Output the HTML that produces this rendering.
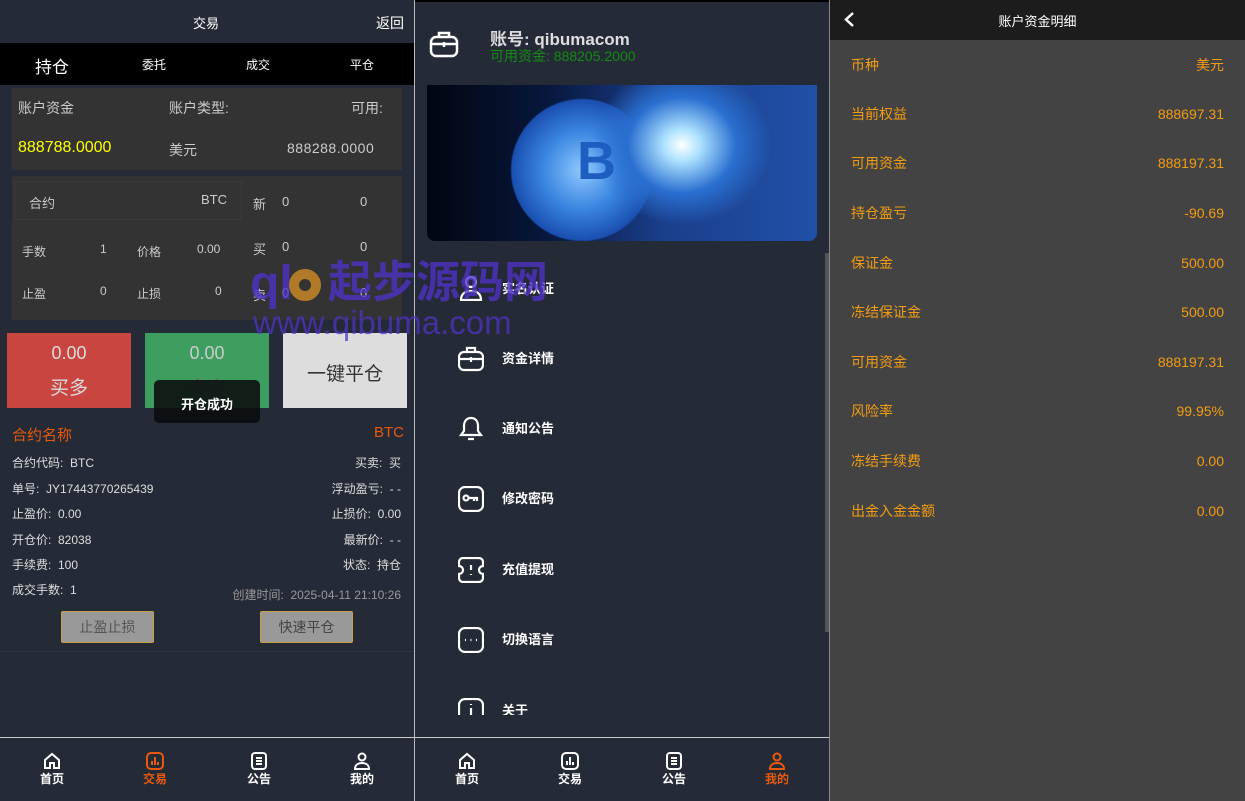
<!DOCTYPE html>
<html><head><meta charset="utf-8"><style>
*{margin:0;padding:0;box-sizing:border-box}
body{width:1245px;height:801px;overflow:hidden;background:#252b36;font-family:"Liberation Sans","Noto Sans CJK SC",sans-serif;position:relative;color:#ddd}
.a{position:absolute;white-space:nowrap}
.p{position:absolute;top:0;height:801px}
#L{left:0;width:414px;background:#252b36}
#M{left:415px;width:415px;background:#252b36}
#R{left:830px;width:415px;background:#434343}
.sep{position:absolute;left:414px;top:0;width:1px;height:801px;background:#bbb}
.sep2{position:absolute;left:829px;top:0;width:1px;height:801px;background:#888}
.nav{position:absolute;left:0;top:737px;width:100%;height:64px;border-top:1px solid #ccc;background:#252b36}
.nav div{position:absolute;top:0;width:60px;text-align:center;font-size:12px;color:#fff;font-weight:bold;line-height:16px}
.nav svg{display:block;margin:14px auto 1px}
.r{font-size:12px;color:#ddd;line-height:16px}
.rr{font-size:14px;color:#f39c12;line-height:20px}
.mi{position:absolute;left:43px;width:26px;height:26px}
.mt{position:absolute;left:87px;font-size:13px;color:#fff;font-weight:bold;line-height:18px}
</style></head><body>
<div id="L" class="p">
 <div class="a" style="left:193px;top:13px;font-size:13px;color:#fff">交易</div>
 <div class="a" style="left:376px;top:13px;font-size:14px;color:#fff">返回</div>
 <div class="a" style="left:0;top:43px;width:414px;height:42px;background:#000"></div>
 <div class="a" style="left:35px;top:53px;font-size:17px;color:#fff">持仓</div>
 <div class="a" style="left:142px;top:56px;font-size:12px;color:#fff">委托</div>
 <div class="a" style="left:246px;top:56px;font-size:12px;color:#fff">成交</div>
 <div class="a" style="left:350px;top:56px;font-size:12px;color:#fff">平仓</div>
 <div class="a" style="left:12px;top:88px;width:390px;height:82px;background:#333"></div>
 <div class="a" style="left:18px;top:98px;font-size:14px;color:#ccc">账户资金</div>
 <div class="a" style="left:169px;top:98px;font-size:14px;color:#ccc">账户类型:</div>
 <div class="a" style="left:351px;top:98px;font-size:14px;color:#ccc">可用:</div>
 <div class="a" style="left:18px;top:139px;font-size:16px;color:#ff0">888788.0000</div>
 <div class="a" style="left:169px;top:140px;font-size:14px;color:#ccc">美元</div>
 <div class="a" style="left:287px;top:140px;font-size:14px;color:#ccc;letter-spacing:.5px">888288.0000</div>
 <div class="a" style="left:12px;top:176px;width:390px;height:144px;background:#333"></div>
 <div class="a" style="left:14px;top:181px;width:228px;height:39px;border:1px solid #3a3a3a"></div>
 <div class="a" style="left:29px;top:193px;font-size:13px;color:#ccc">合约</div>
 <div class="a" style="left:201px;top:192px;font-size:13px;color:#ccc">BTC</div>
 <div class="a" style="left:253px;top:194px;font-size:13px;color:#ccc">新</div>
 <div class="a" style="left:282px;top:194px;font-size:13px;color:#ccc">0</div>
 <div class="a" style="left:360px;top:194px;font-size:13px;color:#ccc">0</div>
 <div class="a" style="left:253px;top:239px;font-size:13px;color:#ccc">买</div>
 <div class="a" style="left:282px;top:239px;font-size:13px;color:#ccc">0</div>
 <div class="a" style="left:360px;top:239px;font-size:13px;color:#ccc">0</div>
 <div class="a" style="left:253px;top:285px;font-size:13px;color:#ccc">卖</div>
 <div class="a" style="left:282px;top:285px;font-size:13px;color:#ccc">0</div>
 <div class="a" style="left:360px;top:285px;font-size:13px;color:#ccc">0</div>
 <div class="a" style="left:22px;top:243px;font-size:12px;color:#ccc">手数</div>
 <div class="a" style="left:100px;top:242px;font-size:12px;color:#ccc">1</div>
 <div class="a" style="left:137px;top:243px;font-size:12px;color:#ccc">价格</div>
 <div class="a" style="left:197px;top:242px;font-size:12px;color:#ccc">0.00</div>
 <div class="a" style="left:22px;top:285px;font-size:12px;color:#ccc">止盈</div>
 <div class="a" style="left:100px;top:284px;font-size:12px;color:#ccc">0</div>
 <div class="a" style="left:137px;top:285px;font-size:12px;color:#ccc">止损</div>
 <div class="a" style="left:215px;top:284px;font-size:12px;color:#ccc">0</div>
 <div class="a" style="left:7px;top:333px;width:124px;height:75px;background:#c9453f"></div>
 <div class="a" style="left:7px;top:343px;width:124px;text-align:center;font-size:18px;color:#ddd">0.00</div>
 <div class="a" style="left:7px;top:373px;width:124px;text-align:center;font-size:19px;color:#ddd">买多</div>
 <div class="a" style="left:145px;top:333px;width:124px;height:75px;background:#3e9e5f"></div>
 <div class="a" style="left:145px;top:343px;width:124px;text-align:center;font-size:18px;color:#ccc">0.00</div>
 <div class="a" style="left:145px;top:373px;width:124px;text-align:center;font-size:19px;color:#666">卖空</div>
 <div class="a" style="left:283px;top:333px;width:124px;height:75px;background:#ddd"></div>
 <div class="a" style="left:283px;top:359px;width:124px;text-align:center;font-size:19px;color:#333">一键平仓</div>
 <div class="a" style="left:154px;top:380px;width:106px;height:43px;background:rgba(10,12,14,.88);border-radius:5px"></div>
 <div class="a" style="left:154px;top:394px;width:106px;text-align:center;font-size:13px;color:#fff;font-weight:bold">开仓成功</div>
 <div class="a" style="left:12px;top:424px;font-size:15px;color:#e8590c">合约名称</div>
 <div class="a" style="left:374px;top:424px;font-size:15px;color:#e8590c">BTC</div>
 <div class="a r" style="left:12px;top:455px">合约代码:&nbsp;&nbsp;BTC</div>
 <div class="a r" style="right:13px;top:455px">买卖:&nbsp;&nbsp;买</div>
 <div class="a r" style="left:12px;top:481px">单号:&nbsp;&nbsp;JY17443770265439</div>
 <div class="a r" style="right:13px;top:481px">浮动盈亏:&nbsp;&nbsp;- -</div>
 <div class="a r" style="left:12px;top:506px">止盈价:&nbsp;&nbsp;0.00</div>
 <div class="a r" style="right:13px;top:506px">止损价:&nbsp;&nbsp;0.00</div>
 <div class="a r" style="left:12px;top:532px">开仓价:&nbsp;&nbsp;82038</div>
 <div class="a r" style="right:13px;top:532px">最新价:&nbsp;&nbsp;- -</div>
 <div class="a r" style="left:12px;top:557px">手续费:&nbsp;&nbsp;100</div>
 <div class="a r" style="right:13px;top:557px">状态:&nbsp;&nbsp;持仓</div>
 <div class="a r" style="left:12px;top:582px">成交手数:&nbsp;&nbsp;1</div>
 <div class="a r" style="right:13px;top:587px;color:#999">创建时间:&nbsp;&nbsp;2025-04-11 21:10:26</div>
 <div class="a" style="left:61px;top:611px;width:93px;height:32px;background:#999;border:1px solid #c9a040;border-radius:2px;text-align:center;line-height:30px;font-size:14px;color:#555">止盈止损</div>
 <div class="a" style="left:260px;top:611px;width:93px;height:32px;background:#999;border:1px solid #c9a040;border-radius:2px;text-align:center;line-height:30px;font-size:14px;color:#444">快速平仓</div>
 <div class="a" style="left:0;top:651px;width:414px;height:1px;background:#2f3540"></div>
 <div class="nav">
  <div style="left:22px"><svg width="18" height="18" viewBox="0 0 18 18" fill="none" stroke="#fff" stroke-width="2"><path d="M2 8L9 2l7 6v8H11v-5H7v5H2z"/></svg>首页</div>
  <div style="left:125px;color:#e8590c"><svg width="18" height="18" viewBox="0 0 18 18" fill="none" stroke="#e8590c" stroke-width="2"><rect x="1" y="1" width="16" height="16" rx="4"/><path d="M6 13V9M9 13V5M12 13v-3"/></svg>交易</div>
  <div style="left:229px"><svg width="18" height="18" viewBox="0 0 18 18" fill="none" stroke="#fff" stroke-width="2"><rect x="2" y="1" width="14" height="16" rx="3"/><path d="M6 6h6M6 9h6M6 12h6"/></svg>公告</div>
  <div style="left:332px"><svg width="18" height="18" viewBox="0 0 18 18" fill="none" stroke="#fff" stroke-width="2"><circle cx="9" cy="5" r="3.5"/><path d="M2 17c0-4 3-6 7-6s7 2 7 6z"/></svg>我的</div>
 </div>
</div>
<div class="sep"></div>
<div id="M" class="p">
 <div class="a" style="left:0;top:0;width:415px;height:2px;background:#000"></div>
 <svg class="a" style="left:14px;top:29px" width="30" height="29" viewBox="0 0 30 29" fill="none" stroke="#fff" stroke-width="2.5"><rect x="2" y="8" width="26" height="19" rx="5"/><path d="M10 8V4h10v4M2 15h26M15 13v5"/></svg>
 <div class="a" style="left:75px;top:25px;font-size:17px;font-weight:bold;color:#ddd">账号:&nbsp;qibumacom</div>
 <div class="a" style="left:75px;top:46px;font-size:14px;color:#138a13">可用资金:&nbsp;888205.2000</div>
 <div class="a" style="left:12px;top:85px;width:390px;height:156px;border-radius:0 0 8px 8px;overflow:hidden;background:radial-gradient(ellipse 90px 80px at 255px 60px,#fff 0%,#aee2ff 20%,#2a6fd0 60%,rgba(20,50,140,0) 100%),radial-gradient(circle 78px at 155px 85px,#8fc8ff 0%,#3a86e0 50%,#1a4fb0 90%,rgba(0,0,0,0) 92%),linear-gradient(90deg,#020610 0%,#07163a 30%,#1a3e8a 60%,#2150a8 100%)">
  <div style="position:absolute;left:150px;top:45px;font-size:54px;color:#1d5ec0;font-weight:bold">B</div>
 </div>
 <div class="a" style="left:410px;top:253px;width:4px;height:379px;background:#555"></div>
 <svg class="mi" style="top:275px" viewBox="0 0 26 26" fill="none" stroke="#fff" stroke-width="2.2"><circle cx="13" cy="7" r="5"/><path d="M3 25c0-6 4-9 10-9s10 3 10 9z"/></svg><div class="mt" style="top:280px">实名认证</div>
 <svg class="mi" style="top:346px" viewBox="0 0 26 26" fill="none" stroke="#fff" stroke-width="2.2"><rect x="1" y="6" width="24" height="18" rx="5"/><path d="M9 6V2h8v4M1 13h24M13 11v5"/></svg><div class="mt" style="top:350px">资金详情</div>
 <svg class="mi" style="top:416px" viewBox="0 0 26 26" fill="none" stroke="#fff" stroke-width="2.2"><path d="M13 2c-5 0-7 4-7 8v5l-3 4h20l-3-4v-5c0-4-2-8-7-8zM10 23h6"/></svg><div class="mt" style="top:420px">通知公告</div>
 <svg class="mi" style="top:486px" viewBox="0 0 26 26" fill="none" stroke="#fff" stroke-width="2.2"><rect x="1" y="1" width="24" height="24" rx="6"/><circle cx="8" cy="12" r="2.5"/><path d="M10 12h9v3M16 12v3"/></svg><div class="mt" style="top:490px">修改密码</div>
 <svg class="mi" style="top:557px" viewBox="0 0 26 26" fill="none" stroke="#fff" stroke-width="2.2"><path d="M5 1h16a4 4 0 014 4v4a4 4 0 000 8v4a4 4 0 01-4 4H5a4 4 0 01-4-4v-4a4 4 0 000-8V5a4 4 0 014-4zM13 8v5M13 17v1"/></svg><div class="mt" style="top:561px">充值提现</div>
 <svg class="mi" style="top:627px" viewBox="0 0 26 26" fill="none" stroke="#fff" stroke-width="2.2"><rect x="1" y="1" width="24" height="24" rx="6"/><path d="M7 13h1M12.5 13h1M18 13h1"/></svg><div class="mt" style="top:631px">切换语言</div>
 <div class="a" style="left:0;top:697px;width:405px;height:18px;overflow:hidden">
  <svg class="mi" style="top:1px" viewBox="0 0 26 26" fill="none" stroke="#fff" stroke-width="2.2"><rect x="1" y="1" width="24" height="24" rx="6"/><path d="M13 6v1M13 10v10"/></svg><div class="mt" style="top:5px">关于</div>
 </div>
 <div class="nav">
  <div style="left:22px"><svg width="18" height="18" viewBox="0 0 18 18" fill="none" stroke="#fff" stroke-width="2"><path d="M2 8L9 2l7 6v8H11v-5H7v5H2z"/></svg>首页</div>
  <div style="left:125px"><svg width="18" height="18" viewBox="0 0 18 18" fill="none" stroke="#fff" stroke-width="2"><rect x="1" y="1" width="16" height="16" rx="4"/><path d="M6 13V9M9 13V5M12 13v-3"/></svg>交易</div>
  <div style="left:229px"><svg width="18" height="18" viewBox="0 0 18 18" fill="none" stroke="#fff" stroke-width="2"><rect x="2" y="1" width="14" height="16" rx="3"/><path d="M6 6h6M6 9h6M6 12h6"/></svg>公告</div>
  <div style="left:332px;color:#e8590c"><svg width="18" height="18" viewBox="0 0 18 18" fill="none" stroke="#e8590c" stroke-width="2"><circle cx="9" cy="5" r="3.5"/><path d="M2 17c0-4 3-6 7-6s7 2 7 6z"/></svg>我的</div>
 </div>
</div>
<div class="sep2"></div>
<div id="R" class="p">
 <div class="a" style="left:0;top:0;width:415px;height:40px;background:#1c1c1c"></div>
 <svg class="a" style="left:13px;top:11px" width="12" height="17" viewBox="0 0 12 17" fill="none" stroke="#fff" stroke-width="2.5"><path d="M10 2L3 8.5 10 15"/></svg>
 <div class="a" style="left:0;top:11px;width:415px;text-align:center;font-size:13px;color:#fff">账户资金明细</div>
 <div class="a rr" style="left:21px;top:55px">币种</div><div class="a rr" style="right:21px;top:55px">美元</div>
 <div class="a rr" style="left:21px;top:104px">当前权益</div><div class="a rr" style="right:21px;top:104px">888697.31</div>
 <div class="a rr" style="left:21px;top:153px">可用资金</div><div class="a rr" style="right:21px;top:153px">888197.31</div>
 <div class="a rr" style="left:21px;top:203px">持仓盈亏</div><div class="a rr" style="right:21px;top:203px">-90.69</div>
 <div class="a rr" style="left:21px;top:253px">保证金</div><div class="a rr" style="right:21px;top:253px">500.00</div>
 <div class="a rr" style="left:21px;top:302px">冻结保证金</div><div class="a rr" style="right:21px;top:302px">500.00</div>
 <div class="a rr" style="left:21px;top:352px">可用资金</div><div class="a rr" style="right:21px;top:352px">888197.31</div>
 <div class="a rr" style="left:21px;top:401px">风险率</div><div class="a rr" style="right:21px;top:401px">99.95%</div>
 <div class="a rr" style="left:21px;top:451px">冻结手续费</div><div class="a rr" style="right:21px;top:451px">0.00</div>
 <div class="a rr" style="left:21px;top:501px">出金入金金额</div><div class="a rr" style="right:21px;top:501px">0.00</div>
</div>
<div class="a" style="left:250px;top:262px;font-size:48px;line-height:44px;font-weight:bold;color:rgba(80,50,200,.78)">ql</div>
<div class="a" style="left:289px;top:269px;width:32px;height:32px;border:10px solid rgba(190,130,40,.9);border-radius:50%"></div>
<div class="a" style="left:328px;top:258px;font-size:44px;line-height:50px;font-weight:bold;color:rgba(80,50,200,.78)">起步源码网</div>
<div class="a" style="left:253px;top:304px;font-size:33px;line-height:38px;color:rgba(80,50,200,.72)">www.qibuma.com</div>
</body></html>
